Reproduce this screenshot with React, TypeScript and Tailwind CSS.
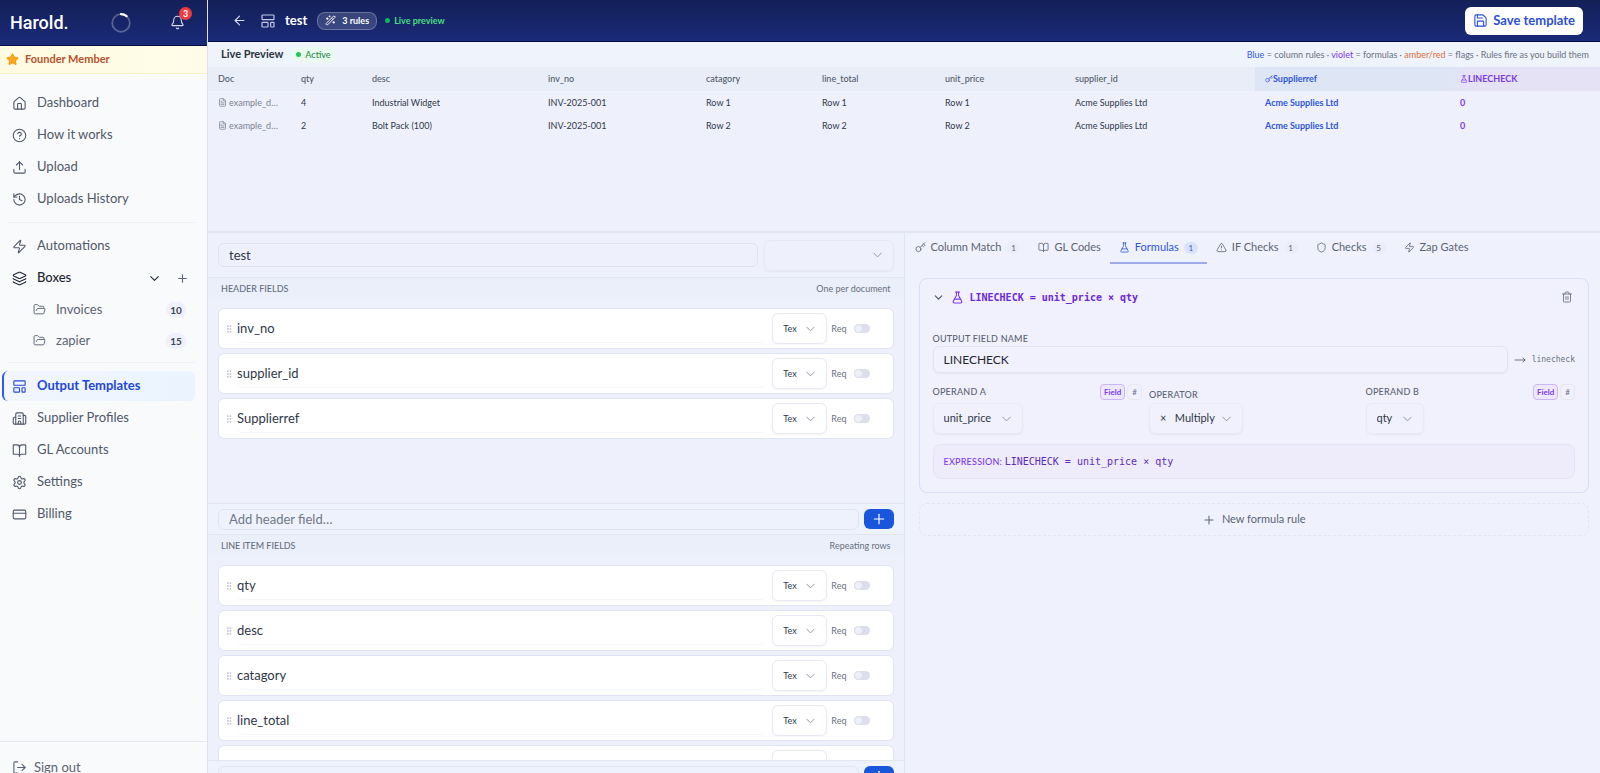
import React from "react";
import {
  ArrowLeft,
  Bell,
  BookOpen,
  Building2,
  ChevronDown,
  CircleHelp,
  CreditCard,
  FileText,
  FlaskConical,
  FolderOpen,
  GripVertical,
  History,
  House,
  Key,
  Layers,
  LayoutTemplate,
  LogOut,
  MoveRight,
  Plus,
  Save,
  Settings,
  Shield,
  Star,
  Trash2,
  TriangleAlert,
  Upload,
  WandSparkles,
  Zap,
  type LucideIcon,
} from "lucide-react";

function NavItem({ icon: Icon, label, active }: { icon: LucideIcon; label: string; active?: boolean }) {
  return (
    <a
      href="#"
      className={
        active
          ? "flex h-[30px] items-center gap-[10px] rounded-md border-l-2 border-[#2f5bf0] bg-gradient-to-r from-[#f2f7fe] to-[#eaf3fe] pl-2 text-[13px] font-bold text-[#2446d8]"
          : "flex h-[30px] items-center gap-[10px] pl-[10px] text-[13px] text-[#4f5869]"
      }
    >
      <Icon size={15} strokeWidth={1.75} className="shrink-0" />
      {label}
    </a>
  );
}

function BoxItem({ label, count }: { label: string; count: number }) {
  return (
    <a href="#" className="flex h-[29px] items-center gap-[10px] pl-[31px] pr-[9px] text-[13px] text-[#5b6474]">
      <FolderOpen size={13} strokeWidth={1.75} className="shrink-0" />
      <span className="flex-1">{label}</span>
      <span className="w-5 rounded-full bg-[#eef0fb] text-center text-[10px] leading-4 font-bold text-[#3d4656]">
        {count}
      </span>
    </a>
  );
}

function Sidebar() {
  return (
    <aside className="flex w-[208px] shrink-0 flex-col border-r border-[#dfe2ee] bg-[#f9fafc]">
      <div className="flex h-[46px] items-center border-b border-[#060c42] bg-gradient-to-b from-[#132058] to-[#1a2a78] pl-[10px] pr-[22px]">
        <span className="font-['Roboto',sans-serif] text-[18px] font-medium text-white">Harold.</span>
        <svg width="20" height="20" viewBox="0 0 20 20" fill="none" className="ml-[42px]">
          <circle cx="10" cy="10" r="8.8" stroke="#ffffff" strokeOpacity="0.28" strokeWidth="1.8" />
          <path d="M10 1.2a8.8 8.8 0 0 1 5.6 2" stroke="#ffffff" strokeWidth="2.2" strokeLinecap="round" />
        </svg>
        <button type="button" aria-label="Notifications" className="relative ml-auto text-[#d5daf0]">
          <Bell size={15} strokeWidth={1.75} />
          <span className="absolute -top-2 left-[9px] h-[13px] w-[13px] rounded-full bg-[#ef3a40] text-center text-[9px] leading-[13px] font-bold text-white">
            3
          </span>
        </button>
      </div>

      <div className="flex h-7 items-center gap-[6px] border-b border-[#fdf0c4] bg-gradient-to-r from-[#fffbe2] to-[#fefce8] pl-[6px]">
        <Star size={13} className="fill-[#ffa51f] text-[#f59e0b]" />
        <span className="text-[11px] font-bold text-[#b5522b]">Founder Member</span>
      </div>

      <nav className="flex flex-col gap-[2px] pt-[14px] pl-[2px] pr-3">
        <NavItem icon={House} label="Dashboard" />
        <NavItem icon={CircleHelp} label="How it works" />
        <NavItem icon={Upload} label="Upload" />
        <NavItem icon={History} label="Uploads History" />
        <hr className="my-[6px] ml-[6px] border-[#eef0f4]" />
        <NavItem icon={Zap} label="Automations" />
        <div className="flex h-[30px] items-center gap-[10px] pl-[10px] pr-1 text-[13px] font-medium text-[#1f2735]">
          <Layers size={15} strokeWidth={1.75} className="shrink-0" />
          <span className="flex-1">Boxes</span>
          <button type="button" aria-label="Collapse boxes">
            <ChevronDown size={15} strokeWidth={1.75} />
          </button>
          <button type="button" aria-label="Add box" className="mr-[2px] ml-1 text-[#5b6474]">
            <Plus size={13} />
          </button>
        </div>
        <BoxItem label="Invoices" count={10} />
        <BoxItem label="zapier" count={15} />
        <hr className="mt-[5px] mb-[6px] ml-[6px] border-[#eef0f4]" />
        <NavItem icon={LayoutTemplate} label="Output Templates" active />
        <NavItem icon={Building2} label="Supplier Profiles" />
        <NavItem icon={BookOpen} label="GL Accounts" />
        <NavItem icon={Settings} label="Settings" />
        <NavItem icon={CreditCard} label="Billing" />
      </nav>

      <div className="mt-auto h-[50px] border-t border-[#e6e8ef] px-3 pt-4">
        <button type="button" className="flex items-center gap-[7px] text-[13px] text-[#5b6474]">
          <LogOut size={15} strokeWidth={1.75} />
          Sign out
        </button>
      </div>
    </aside>
  );
}

function TopBar() {
  return (
    <header className="flex h-[42px] shrink-0 items-center border-b border-[#060c42] bg-gradient-to-b from-[#132058] to-[#1a2a78] pl-6 pr-[17px]">
      <button type="button" aria-label="Back" className="text-[#d5daf0]">
        <ArrowLeft size={15} strokeWidth={1.75} />
      </button>
      <LayoutTemplate size={16} strokeWidth={1.75} className="ml-[13px] text-[#c3c9e6]" />
      <h1 className="ml-[9px] text-[13px] font-bold text-white">test</h1>
      <span className="ml-[10px] flex h-[18px] items-center gap-[6px] rounded-lg border border-white/25 bg-white/15 px-[7px] text-[9px] font-bold text-white">
        <WandSparkles size={11} />3 rules
      </span>
      <span className="ml-2 flex items-center gap-1 text-[9px] font-bold text-[#4ade80]">
        <span className="h-[5px] w-[5px] rounded-full bg-[#10b65c]" />
        Live preview
      </span>
      <button
        type="button"
        className="ml-auto flex h-7 items-center gap-[5px] rounded-md bg-white px-2 text-[13px] font-bold text-[#2b50d6]"
      >
        <Save size={15} strokeWidth={1.75} />
        Save template
      </button>
    </header>
  );
}

const columns = [
  { name: "Doc", width: "w-[83px]" },
  { name: "qty", width: "w-[71px]" },
  { name: "desc", width: "w-[176px]" },
  { name: "inv_no", width: "w-[158px]" },
  { name: "catagory", width: "w-[116px]" },
  { name: "line_total", width: "w-[123px]" },
  { name: "unit_price", width: "w-[130px]" },
  { name: "supplier_id", width: "w-[190px]" },
];

const rows = [
  ["4", "Industrial Widget", "INV-2025-001", "Row 1", "Row 1", "Row 1", "Acme Supplies Ltd"],
  ["2", "Bolt Pack (100)", "INV-2025-001", "Row 2", "Row 2", "Row 2", "Acme Supplies Ltd"],
];

function LivePreview() {
  return (
    <section className="h-[191px] shrink-0 border-b-2 border-[#e2e6f2] bg-[#eef1fc]">
      <div className="flex h-[25px] items-center gap-2 bg-[#eff3fc] pl-[13px] pr-[11px]">
        <h2 className="text-[11px] font-bold text-[#2a3342]">Live Preview</h2>
        <span className="flex h-[15px] items-center gap-1 rounded-full bg-[#e8fbee] px-[5px] text-[9px] font-medium text-[#2c8a4c]">
          <span className="h-[5px] w-[5px] rounded-full bg-[#22c55e]" />
          Active
        </span>
        <p className="ml-auto text-[9px] text-[#6b7280]">
          <span className="text-[#2f5be0]">Blue</span> = column rules · <span className="text-[#7c3aed]">violet</span> =
          formulas · <span className="text-[#e07038]">amber/red</span> = flags · Rules fire as you build them
        </p>
      </div>
      <table className="w-full table-fixed text-left text-[9px] text-[#2f3848]">
        <colgroup>
          {columns.map((c) => (
            <col key={c.name} className={c.width} />
          ))}
          <col className="w-[195px]" />
          <col className="w-[150px]" />
        </colgroup>
        <thead>
          <tr className="h-6 bg-[#e9edf7] text-[#525b6b]">
            {columns.map((c) => (
              <th key={c.name} className="px-[10px] font-medium">
                {c.name}
              </th>
            ))}
            <th className="bg-[#dee6f5] px-[10px] font-bold text-[#2f55d8]">
              <span className="flex items-center">
                <Key size={8} />
                Supplierref
              </span>
            </th>
            <th className="bg-gradient-to-r from-[#dee6f5] to-[#e4e2f4] to-10% px-[10px] font-bold text-[#7c3aed]">
              <span className="flex items-center">
                <FlaskConical size={8} />
                LINECHECK
              </span>
            </th>
          </tr>
        </thead>
        <tbody>
          {rows.map((r, i) => (
            <tr key={i} className="h-[23px] border-b border-[#edf0fa]">
              <td className="px-[10px] text-[#7a8291]">
                <span className="flex items-center gap-[2px]">
                  <FileText size={9} />
                  example_d…
                </span>
              </td>
              {r.map((v, j) => (
                <td key={j} className="px-[10px]">
                  {v}
                </td>
              ))}
              <td className="px-[10px] font-bold text-[#2f55d8]">Acme Supplies Ltd</td>
              <td className="px-[10px] font-bold text-[#7c3aed]">0</td>
            </tr>
          ))}
        </tbody>
      </table>
    </section>
  );
}

function SelectBox({ label, value, className }: { label: string; value: string; className: string }) {
  return (
    <span className={"relative inline-block " + className}>
      <select
        aria-label={label}
        defaultValue={value}
        className="h-full w-full appearance-none rounded-md border border-[#e7e9f5] bg-transparent pl-[10px] shadow-xs outline-none"
      >
        <option value={value}>{value}</option>
      </select>
      <ChevronDown
        size={15}
        strokeWidth={1.5}
        className="pointer-events-none absolute top-1/2 right-[9px] -translate-y-1/2 text-[#8a919f]"
      />
    </span>
  );
}

function FieldRow({ name }: { name: string }) {
  return (
    <li className="flex h-[41px] shrink-0 items-center rounded-md border border-[#e0e3f3] bg-white pr-[23px] pl-[5px]">
      <GripVertical size={10} className="shrink-0 text-[#b6bbc6]" />
      <input
        aria-label="Field name"
        defaultValue={name}
        className="ml-[3px] h-7 min-w-0 flex-1 rounded-md border-b border-[#f5f6fa] text-[13px] text-[#2f3848] outline-none"
      />
      <SelectBox label="Field type" value="Tex" className="ml-[6px] h-[31px] w-[55px] text-[9px] text-[#2f3848]" />
      <label className="ml-1 flex items-center gap-[7px] text-[9px] text-[#6b7280]">
        Req
        <input
          type="checkbox"
          className="h-[9px] w-4 appearance-none rounded-full bg-[#dcdeeb] before:block before:h-[9px] before:w-[9px] before:rounded-full before:border before:border-[#dcdeeb] before:bg-[#eef0f8]"
        />
      </label>
    </li>
  );
}

function FieldSection({
  title,
  note,
  placeholder,
  fields,
}: {
  title: string;
  note: string;
  placeholder: string;
  fields: string[];
}) {
  return (
    <section className="border-t border-[#e2e6f2]">
      <div className="flex h-[22px] items-center justify-between bg-[#ebeffa] px-[13px] text-[9px] text-[#667080]">
        <h3 className="font-medium">{title}</h3>
        <span>{note}</span>
      </div>
      <ul className="flex h-[203px] flex-col gap-1 overflow-hidden px-[10px] pt-2">
        {fields.map((f) => (
          <FieldRow key={f} name={f} />
        ))}
      </ul>
      <div className="flex h-[31px] items-center gap-[5px] border-t border-[#e2e6f2] bg-[#eef2fc] px-[10px]">
        <input
          aria-label={placeholder}
          placeholder={placeholder}
          className="h-[21px] min-w-0 flex-1 rounded-md border border-[#e0e4f2] px-[10px] text-[13px] outline-none placeholder:text-[#6f7887]"
        />
        <button
          type="button"
          aria-label="Add field"
          className="flex h-5 w-[30px] items-center justify-center rounded-md bg-[#1a56db] text-white"
        >
          <Plus size={16} strokeWidth={1.75} />
        </button>
      </div>
    </section>
  );
}

function FieldsPanel() {
  return (
    <div className="flex-1 border-r border-[#e0e3f2] bg-[#eef1fc]">
      <div className="flex h-11 items-center gap-[6px] px-[10px]">
        <input
          aria-label="Template name"
          defaultValue="test"
          className="h-6 min-w-0 flex-1 rounded-md border border-[#e0e4f2] px-[10px] text-[13px] text-[#2f3848] outline-none"
        />
        <SelectBox label="Template type" value="" className="h-[31px] w-[130px]" />
      </div>
      <FieldSection
        title="HEADER FIELDS"
        note="One per document"
        placeholder="Add header field…"
        fields={["inv_no", "supplier_id", "Supplierref"]}
      />
      <FieldSection
        title="LINE ITEM FIELDS"
        note="Repeating rows"
        placeholder=""
        fields={["qty", "desc", "catagory", "line_total", ""]}
      />
    </div>
  );
}

const tabs: { icon: LucideIcon; label: string; count?: number; active?: boolean }[] = [
  { icon: Key, label: "Column Match", count: 1 },
  { icon: BookOpen, label: "GL Codes" },
  { icon: FlaskConical, label: "Formulas", count: 1, active: true },
  { icon: TriangleAlert, label: "IF Checks", count: 1 },
  { icon: Shield, label: "Checks", count: 5 },
  { icon: Zap, label: "Zap Gates" },
];

function Operand({ label, value, width }: { label: string; value: string; width: string }) {
  return (
    <div className="flex-1">
      <div className="flex h-4 items-center gap-[2px]">
        <span className="flex-1 text-[9px] font-medium tracking-wide text-[#5b6474]">{label}</span>
        <button
          type="button"
          className="h-4 rounded-sm border border-[#c9b5f8] bg-[#eee8fd] px-[3px] text-[8px] font-bold text-[#7c3aed]"
        >
          Field
        </button>
        <button type="button" className="h-4 rounded-sm border border-[#e6e7f3] px-1 text-[8px] text-[#6b7280]">
          #
        </button>
      </div>
      <SelectBox label={label} value={value} className={"mt-[3px] h-[31px] text-[11px] text-[#2f3848] " + width} />
    </div>
  );
}

function RulesPanel() {
  return (
    <div className="flex-1 bg-[#eff2fc]">
      <div className="flex h-[31px] pl-[1px]">
        {tabs.map(({ icon: Icon, label, count, active }) => (
          <button
            key={label}
            type="button"
            className={
              active
                ? "flex items-center gap-[5px] border-b-2 border-[#9fa9ec] px-[9px] text-[11px] text-[#2f55d8]"
                : "flex items-center gap-[5px] border-b-2 border-transparent px-[9px] text-[11px] text-[#5b6474]"
            }
          >
            <Icon size={11} strokeWidth={1.75} />
            {label}
            {count !== undefined && (
              <span
                className={
                  active
                    ? "h-3 w-[14px] rounded-full bg-[#dbe3fb] text-[8px] leading-3"
                    : "h-3 w-[14px] rounded-full bg-[#ebeef8] text-[8px] leading-3"
                }
              >
                {count}
              </span>
            )}
          </button>
        ))}
      </div>

      <div className="px-[11px] pt-[14px] pl-[14px]">
        <section className="rounded-lg border border-[#dadcf8] bg-[#f0f1fc] px-[13px] pb-[13px]">
          <div className="flex h-9 items-center">
            <ChevronDown size={13} className="-ml-px text-[#4b5563]" />
            <FlaskConical size={13} className="ml-[6px] text-[#7c3aed]" />
            <h3 className="ml-[6px] font-['DejaVu_Sans_Mono',monospace] text-[10px] font-bold text-[#6d28d9]">
              LINECHECK = unit_price × qty
            </h3>
            <button type="button" aria-label="Delete rule" className="mr-[2px] ml-auto text-[#6b7280]">
              <Trash2 size={12} strokeWidth={1.75} />
            </button>
          </div>

          <label
            htmlFor="output-name"
            className="mt-4 block text-[9px] leading-[15px] font-medium tracking-wide text-[#5b6474]"
          >
            OUTPUT FIELD NAME
          </label>
          <div className="flex h-[27px] items-center">
            <input
              id="output-name"
              defaultValue="LINECHECK"
              className="h-[27px] min-w-0 flex-1 rounded-md border border-[#e1e3f2] px-[10px] text-[12px] text-[#1f2735] shadow-xs outline-none"
            />
            <MoveRight size={12} strokeWidth={1.75} className="ml-[6px] text-[#5b6474]" />
            <span className="ml-[6px] font-['DejaVu_Sans_Mono',monospace] text-[8px] text-[#6b7280]">linecheck</span>
          </div>

          <div className="mt-[11px] flex gap-[7px]">
            <Operand label="OPERAND A" value="unit_price" width="w-[90px]" />
            <div className="flex-1">
              <span className="block h-4 pt-1 text-[9px] font-medium tracking-wide text-[#5b6474]">OPERATOR</span>
              <SelectBox
                label="Operator"
                value={"×\u00a0\u00a0\u00a0Multiply"}
                className="mt-[3px] h-[31px] w-[94px] text-[11px] text-[#2f3848]"
              />
            </div>
            <Operand label="OPERAND B" value="qty" width="w-[58px]" />
          </div>

          <p className="mt-[10px] h-[35px] rounded-lg border border-[#e6e3f7] bg-[#eeecfb] px-[10px] text-[10px] leading-[33px] text-[#5b2bbd]">
            <span className="text-[9px] font-medium tracking-wide text-[#7c3aed]">EXPRESSION:</span>{" "}
            <span className="font-['DejaVu_Sans_Mono',monospace]">LINECHECK = unit_price × qty</span>
          </p>
        </section>

        <button
          type="button"
          className="mt-[10px] flex h-[33px] w-full items-center justify-center gap-[6px] rounded-lg border border-dashed border-[#e3e6f2] text-[11px] text-[#5b6474]"
        >
          <Plus size={14} strokeWidth={1.75} />
          New formula rule
        </button>
      </div>
    </div>
  );
}

export default function App() {
  return (
    <div className="h-screen overflow-hidden bg-[#eef1fc] font-['Lato',sans-serif]">
      <div className="flex min-h-[791px]">
        <Sidebar />
        <main className="flex min-w-0 flex-1 flex-col">
          <TopBar />
          <LivePreview />
          <div className="flex flex-1">
            <FieldsPanel />
            <RulesPanel />
          </div>
        </main>
      </div>
    </div>
  );
}
